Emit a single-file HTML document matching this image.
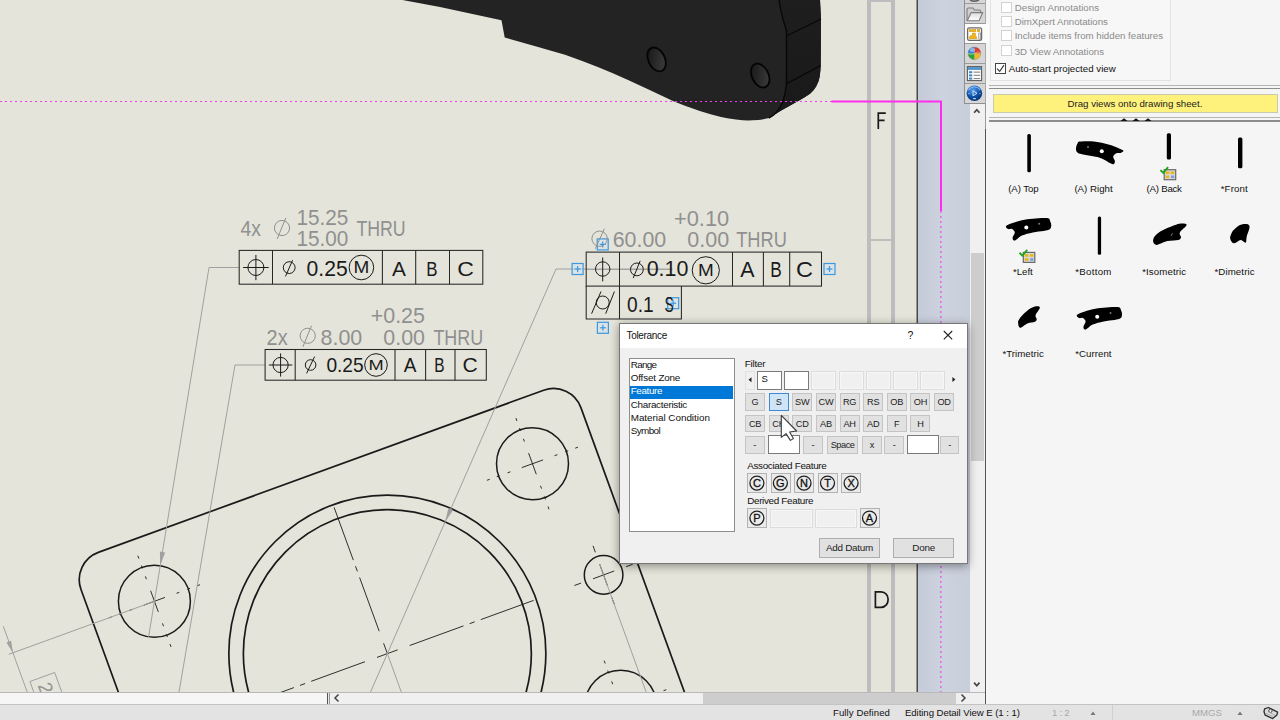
<!DOCTYPE html>
<html><head><meta charset="utf-8">
<style>
*{margin:0;padding:0;box-sizing:border-box}
html,body{width:1280px;height:720px;overflow:hidden;background:#e4e4da;font-family:"Liberation Sans",sans-serif;}
#root{position:absolute;left:0;top:0;width:1280px;height:720px;overflow:hidden}
.abs{position:absolute}
svg{position:absolute;left:0;top:0;overflow:hidden}
svg text{font-family:"Liberation Sans",sans-serif}
.btn{position:absolute;background:#e1e1e1;border:1px solid #c4c4c4;font-size:9.2px;color:#222;text-align:center;line-height:15px;height:17.5px;width:20px;white-space:nowrap;letter-spacing:-0.2px}
.cb{width:20px !important;height:20px !important;background:#eaeaea !important;border-color:#b2b2b2 !important}
.box{position:absolute;background:#fff;border:1px solid #7a7a7a;height:18px}
.dbox{position:absolute;background:#f0f0f0;border:1px solid #dcdcdc;height:18px;box-shadow:inset 0 0 0 1px #f7f7f7}
.lbl{position:absolute;font-size:10px;color:#111;white-space:nowrap;line-height:12px}
.glbl{position:absolute;font-size:10px;color:#8a8a8a;white-space:nowrap;line-height:12px}
.chk{position:absolute;width:11px;height:11px;background:#fff;border:1px solid #d2d2d2}
.tl{position:absolute;font-size:10px;color:#111;white-space:nowrap;line-height:12px;transform:translateX(-50%)}
</style></head><body><div id="root">
<svg id="cv" width="985" height="692" viewBox="0 0 985 692">
<defs>
<linearGradient id="bg2" x1="0" y1="0" x2="1" y2="0"><stop offset="0" stop-color="#c6cbd9"/><stop offset="0.5" stop-color="#cdd2df"/><stop offset="1" stop-color="#c9cedb"/></linearGradient>
</defs>
<rect x="0" y="0" width="918" height="692" fill="#e4e4da"/>
<rect x="918" y="0" width="52" height="692" fill="url(#bg2)"/>
<rect x="916.5" y="0" width="1.5" height="692" fill="#484848"/>
<rect x="867" y="0" width="4" height="692" fill="#bdbdbd"/>
<rect x="891" y="0" width="4" height="692" fill="#bdbdbd"/>
<rect x="867" y="0" width="28" height="2" fill="#bdbdbd"/>
<rect x="871" y="239" width="20" height="2" fill="#bdbdbd"/>
<!-- 3D part -->
<defs><linearGradient id="hg" x1="0" y1="0" x2="1" y2="1"><stop offset="0.15" stop-color="#1a1a1a"/><stop offset="0.9" stop-color="#3d3d3d"/></linearGradient><linearGradient id="sf" x1="0" y1="0" x2="0" y2="1"><stop offset="0" stop-color="#1e1e1e"/><stop offset="1" stop-color="#191919"/></linearGradient></defs>
<path d="M402.5,0 L440,7 L501.5,20.3 L504.7,37.5 Q535,46 565,54.7 Q600,67 627.5,79.7 Q650,90 674,101.5 Q700,112 721,117 Q740,121 752.5,120.3 Q762,120.2 768.75,118.1 L781.25,110.6 L800,100 Q806,96.5 810,93.75 Q814,90.5 816.25,86.25 Q819,81.5 819.75,76.25 Q820.6,70 820.7,65 L821,19 L820,0 Z" fill="#232323"/>
<path d="M779,0 Q782,18 786.5,31 L786.5,83.75 Q785.5,94 782.5,102.5 Q780,108 776.25,112.5 Q773,116 768.75,118.1 L781.25,110.6 L800,100 Q806,96.5 810,93.75 Q814,90.5 816.25,86.25 Q819,81.5 819.75,76.25 Q820.6,70 820.7,65 L821,19 L820,0 Z" fill="url(#sf)"/>
<path d="M779,0 Q782,18 786.5,31 L786.5,83.75 Q785.5,94 782.5,102.5 Q780,108 776.25,112.5 Q773,116 768.75,118.1" fill="none" stroke="#080808" stroke-width="1.4"/>
<line x1="786.5" y1="36" x2="821" y2="19" stroke="#080808" stroke-width="1.3"/>
<line x1="786.5" y1="83.75" x2="820.5" y2="65.6" stroke="#080808" stroke-width="1.3"/>
<ellipse cx="656.6" cy="59.4" rx="8.3" ry="12.6" transform="rotate(-26 656.6 59.4)" fill="url(#hg)" stroke="#040404" stroke-width="1.8"/>
<ellipse cx="760.2" cy="75.6" rx="8.3" ry="12.6" transform="rotate(-26 760.2 75.6)" fill="url(#hg)" stroke="#040404" stroke-width="1.8"/>
<!-- magenta lines -->
<line x1="0" y1="101.5" x2="832" y2="101.5" stroke="#f23cf0" stroke-width="1.1" stroke-dasharray="2,3"/>
<path d="M831.5,101.5 L941,101.5 L941,211" fill="none" stroke="#ff2eee" stroke-width="2"/>
<line x1="940.9" y1="211" x2="940.9" y2="692" stroke="#f23cf0" stroke-width="1.1" stroke-dasharray="2,3"/>
<!-- zone letters -->
<path d="M878.3,129 L878.3,113.1 L885.8,113.1 M878.3,120.3 L884.6,120.3" fill="none" stroke="#1a1a1a" stroke-width="1.7"/>
<path d="M875.4,591.9 L881,591.9 C890.5,591.9 890.5,607.3 881,607.3 L875.4,607.3 Z" fill="none" stroke="#1a1a1a" stroke-width="1.7"/>
<path d="M240.0,1026.5 L81.0,589.5 A29,29 0 0 1 98.3,552.4 L543.7,390.2 A29,29 0 0 1 580.9,407.6 L739.9,844.5" fill="none" stroke="#1a1a1a" stroke-width="1.7"/>
<circle cx="387.35" cy="653.6" r="158.5" fill="none" stroke="#1a1a1a" stroke-width="1.7"/>
<circle cx="387.35" cy="653.6" r="144" fill="none" stroke="#1a1a1a" stroke-width="1.7"/>
<circle cx="154.4" cy="601.3" r="36" fill="none" stroke="#1a1a1a" stroke-width="1.5"/>
<line x1="143.8" y1="605.2" x2="165.0" y2="597.4" stroke="#1a1a1a" stroke-width="0.9"/>
<line x1="132.3" y1="609.4" x2="129.5" y2="610.4" stroke="#1a1a1a" stroke-width="0.9"/>
<line x1="121.5" y1="613.3" x2="118.7" y2="614.3" stroke="#1a1a1a" stroke-width="0.9"/>
<line x1="111.7" y1="616.9" x2="108.8" y2="617.9" stroke="#1a1a1a" stroke-width="0.9"/>
<line x1="176.5" y1="593.3" x2="179.3" y2="592.3" stroke="#1a1a1a" stroke-width="0.9"/>
<line x1="187.3" y1="589.3" x2="190.1" y2="588.3" stroke="#1a1a1a" stroke-width="0.9"/>
<line x1="197.2" y1="585.8" x2="200.0" y2="584.7" stroke="#1a1a1a" stroke-width="0.9"/>
<line x1="150.6" y1="590.7" x2="158.3" y2="611.9" stroke="#1a1a1a" stroke-width="0.9"/>
<line x1="146.4" y1="579.2" x2="145.4" y2="576.4" stroke="#1a1a1a" stroke-width="0.9"/>
<line x1="142.4" y1="568.4" x2="141.4" y2="565.6" stroke="#1a1a1a" stroke-width="0.9"/>
<line x1="138.9" y1="558.6" x2="137.8" y2="555.7" stroke="#1a1a1a" stroke-width="0.9"/>
<line x1="162.5" y1="623.4" x2="163.5" y2="626.2" stroke="#1a1a1a" stroke-width="0.9"/>
<line x1="166.4" y1="634.2" x2="167.4" y2="637.0" stroke="#1a1a1a" stroke-width="0.9"/>
<line x1="170.0" y1="644.1" x2="171.0" y2="646.9" stroke="#1a1a1a" stroke-width="0.9"/>
<circle cx="532.5" cy="463.7" r="36" fill="none" stroke="#1a1a1a" stroke-width="1.5"/>
<line x1="521.8" y1="467.6" x2="543.1" y2="459.9" stroke="#1a1a1a" stroke-width="0.9"/>
<line x1="510.4" y1="471.8" x2="507.6" y2="472.8" stroke="#1a1a1a" stroke-width="0.9"/>
<line x1="499.6" y1="475.7" x2="496.7" y2="476.7" stroke="#1a1a1a" stroke-width="0.9"/>
<line x1="489.7" y1="479.3" x2="486.9" y2="480.3" stroke="#1a1a1a" stroke-width="0.9"/>
<line x1="554.5" y1="455.7" x2="557.4" y2="454.7" stroke="#1a1a1a" stroke-width="0.9"/>
<line x1="565.3" y1="451.7" x2="568.2" y2="450.7" stroke="#1a1a1a" stroke-width="0.9"/>
<line x1="575.2" y1="448.2" x2="578.0" y2="447.1" stroke="#1a1a1a" stroke-width="0.9"/>
<line x1="528.6" y1="453.1" x2="536.3" y2="474.3" stroke="#1a1a1a" stroke-width="0.9"/>
<line x1="524.4" y1="441.6" x2="523.4" y2="438.8" stroke="#1a1a1a" stroke-width="0.9"/>
<line x1="520.5" y1="430.8" x2="519.5" y2="428.0" stroke="#1a1a1a" stroke-width="0.9"/>
<line x1="516.9" y1="421.0" x2="515.9" y2="418.1" stroke="#1a1a1a" stroke-width="0.9"/>
<line x1="540.5" y1="485.8" x2="541.5" y2="488.6" stroke="#1a1a1a" stroke-width="0.9"/>
<line x1="544.4" y1="496.6" x2="545.5" y2="499.4" stroke="#1a1a1a" stroke-width="0.9"/>
<line x1="548.0" y1="506.5" x2="549.0" y2="509.3" stroke="#1a1a1a" stroke-width="0.9"/>
<circle cx="620.7" cy="706.3" r="36" fill="none" stroke="#1a1a1a" stroke-width="1.5"/>
<line x1="610.1" y1="710.1" x2="631.4" y2="702.4" stroke="#1a1a1a" stroke-width="0.9"/>
<line x1="598.7" y1="714.3" x2="595.8" y2="715.3" stroke="#1a1a1a" stroke-width="0.9"/>
<line x1="587.8" y1="718.2" x2="585.0" y2="719.3" stroke="#1a1a1a" stroke-width="0.9"/>
<line x1="578.0" y1="721.8" x2="575.2" y2="722.8" stroke="#1a1a1a" stroke-width="0.9"/>
<line x1="642.8" y1="698.2" x2="645.6" y2="697.2" stroke="#1a1a1a" stroke-width="0.9"/>
<line x1="653.6" y1="694.3" x2="656.4" y2="693.3" stroke="#1a1a1a" stroke-width="0.9"/>
<line x1="663.5" y1="690.7" x2="666.3" y2="689.7" stroke="#1a1a1a" stroke-width="0.9"/>
<line x1="616.9" y1="695.6" x2="624.6" y2="716.9" stroke="#1a1a1a" stroke-width="0.9"/>
<line x1="612.7" y1="684.2" x2="611.7" y2="681.4" stroke="#1a1a1a" stroke-width="0.9"/>
<line x1="608.8" y1="673.4" x2="607.7" y2="670.5" stroke="#1a1a1a" stroke-width="0.9"/>
<line x1="605.2" y1="663.5" x2="604.1" y2="660.7" stroke="#1a1a1a" stroke-width="0.9"/>
<line x1="628.8" y1="728.3" x2="629.8" y2="731.2" stroke="#1a1a1a" stroke-width="0.9"/>
<line x1="632.7" y1="739.1" x2="633.7" y2="742.0" stroke="#1a1a1a" stroke-width="0.9"/>
<line x1="636.3" y1="749.0" x2="637.3" y2="751.8" stroke="#1a1a1a" stroke-width="0.9"/>
<circle cx="603.6" cy="574.9" r="19.3" fill="none" stroke="#1a1a1a" stroke-width="1.5"/>
<line x1="593.0" y1="578.8" x2="614.2" y2="571.0" stroke="#1a1a1a" stroke-width="0.9"/>
<line x1="581.0" y1="583.1" x2="574.4" y2="585.5" stroke="#1a1a1a" stroke-width="0.9"/>
<line x1="626.1" y1="566.7" x2="632.7" y2="564.3" stroke="#1a1a1a" stroke-width="0.9"/>
<line x1="599.7" y1="564.3" x2="607.4" y2="585.5" stroke="#1a1a1a" stroke-width="0.9"/>
<line x1="595.4" y1="552.3" x2="593.0" y2="545.8" stroke="#1a1a1a" stroke-width="0.9"/>
<line x1="611.8" y1="597.5" x2="614.2" y2="604.0" stroke="#1a1a1a" stroke-width="0.9"/>
<circle cx="242.6" cy="843.6" r="36" fill="none" stroke="#1a1a1a" stroke-width="1.5"/>
<line x1="232.0" y1="847.4" x2="253.2" y2="839.7" stroke="#1a1a1a" stroke-width="0.9"/>
<line x1="220.5" y1="851.6" x2="217.7" y2="852.6" stroke="#1a1a1a" stroke-width="0.9"/>
<line x1="209.7" y1="855.5" x2="206.9" y2="856.6" stroke="#1a1a1a" stroke-width="0.9"/>
<line x1="199.8" y1="859.1" x2="197.0" y2="860.2" stroke="#1a1a1a" stroke-width="0.9"/>
<line x1="264.7" y1="835.5" x2="267.5" y2="834.5" stroke="#1a1a1a" stroke-width="0.9"/>
<line x1="275.5" y1="831.6" x2="278.3" y2="830.6" stroke="#1a1a1a" stroke-width="0.9"/>
<line x1="285.3" y1="828.0" x2="288.2" y2="827.0" stroke="#1a1a1a" stroke-width="0.9"/>
<line x1="238.7" y1="832.9" x2="246.5" y2="854.2" stroke="#1a1a1a" stroke-width="0.9"/>
<line x1="234.6" y1="821.5" x2="233.5" y2="818.7" stroke="#1a1a1a" stroke-width="0.9"/>
<line x1="230.6" y1="810.7" x2="229.6" y2="807.9" stroke="#1a1a1a" stroke-width="0.9"/>
<line x1="227.0" y1="800.8" x2="226.0" y2="798.0" stroke="#1a1a1a" stroke-width="0.9"/>
<line x1="250.6" y1="865.6" x2="251.7" y2="868.5" stroke="#1a1a1a" stroke-width="0.9"/>
<line x1="254.6" y1="876.5" x2="255.6" y2="879.3" stroke="#1a1a1a" stroke-width="0.9"/>
<line x1="258.2" y1="886.3" x2="259.2" y2="889.1" stroke="#1a1a1a" stroke-width="0.9"/>
<line x1="387.4" y1="653.6" x2="397.7" y2="649.8" stroke="#1a1a1a" stroke-width="0.9"/>
<line x1="409.7" y1="645.5" x2="463.5" y2="625.9" stroke="#1a1a1a" stroke-width="0.9"/>
<line x1="469.6" y1="623.7" x2="474.7" y2="621.8" stroke="#1a1a1a" stroke-width="0.9"/>
<line x1="480.8" y1="619.6" x2="533.6" y2="600.4" stroke="#1a1a1a" stroke-width="0.9"/>
<line x1="387.4" y1="653.6" x2="377.0" y2="657.4" stroke="#1a1a1a" stroke-width="0.9"/>
<line x1="365.0" y1="661.7" x2="311.2" y2="681.3" stroke="#1a1a1a" stroke-width="0.9"/>
<line x1="305.1" y1="683.5" x2="300.0" y2="685.4" stroke="#1a1a1a" stroke-width="0.9"/>
<line x1="293.9" y1="687.6" x2="11.5" y2="790.4" stroke="#1a1a1a" stroke-width="0.9"/>
<line x1="387.4" y1="653.6" x2="383.6" y2="643.3" stroke="#1a1a1a" stroke-width="0.9"/>
<line x1="379.2" y1="631.2" x2="359.6" y2="577.5" stroke="#1a1a1a" stroke-width="0.9"/>
<line x1="357.4" y1="571.4" x2="355.5" y2="566.2" stroke="#1a1a1a" stroke-width="0.9"/>
<line x1="353.3" y1="560.1" x2="334.1" y2="507.4" stroke="#1a1a1a" stroke-width="0.9"/>
<line x1="239.0" y1="267.5" x2="209.0" y2="267.5" stroke="#a0a0a0" stroke-width="1"/>
<line x1="209.0" y1="267.5" x2="148.6" y2="636.8" stroke="#a0a0a0" stroke-width="1"/>
<path d="M160.2,565.8 L159.9,551.5 L165.1,552.4 Z" fill="#a0a0a0"/>
<line x1="265.0" y1="365.0" x2="235.0" y2="365.0" stroke="#a0a0a0" stroke-width="1"/>
<line x1="235.0" y1="365.0" x2="179.0" y2="692.0" stroke="#a0a0a0" stroke-width="1"/>
<line x1="586.0" y1="269.0" x2="556.0" y2="269.0" stroke="#a0a0a0" stroke-width="1"/>
<line x1="586" y1="269.2" x2="672.5" y2="269.2" stroke="#7c7c7c" stroke-width="0.9"/>
<line x1="556.0" y1="269.0" x2="369.3" y2="694.8" stroke="#a0a0a0" stroke-width="1"/>
<path d="M445.2,521.7 L448.4,507.9 L453.2,509.9 Z" fill="#a0a0a0"/>
<line x1="387.4" y1="653.6" x2="402.7" y2="695.9" stroke="#a0a0a0" stroke-width="1"/>
<line x1="154.4" y1="601.3" x2="8.8" y2="654.3" stroke="#a0a0a0" stroke-width="1"/>
<line x1="3.3" y1="626.3" x2="43.3" y2="736.3" stroke="#a0a0a0" stroke-width="1"/>
<path d="M12.9,652.8 L6.5,642.4 L11.1,640.7 Z" fill="#a0a0a0"/>
<line x1="599.6" y1="564.1" x2="648.0" y2="697.1" stroke="#a0a0a0" stroke-width="1"/>
<g transform="translate(387.35,653.6) rotate(-20)"><rect x="-345.4" y="-96" width="26.3" height="60" fill="none" stroke="#a0a0a0" stroke-width="0.9"/><text transform="translate(-339.6,-90) rotate(90)" font-size="19.5" fill="#959595">2</text></g>
<rect x="597.2" y="238.9" width="11" height="11" fill="#cfe3f5" fill-opacity="0.55" stroke="#3f97dc" stroke-width="1.2"/>
<line x1="599.7" y1="244.4" x2="605.7" y2="244.4" stroke="#3f97dc" stroke-width="1.2"/>
<line x1="602.7" y1="241.4" x2="602.7" y2="247.4" stroke="#3f97dc" stroke-width="1.2"/>
<rect x="572.1" y="263.5" width="11" height="11" fill="#cfe3f5" fill-opacity="0.55" stroke="#3f97dc" stroke-width="1.2"/>
<line x1="574.6" y1="269.0" x2="580.6" y2="269.0" stroke="#3f97dc" stroke-width="1.2"/>
<line x1="577.6" y1="266.0" x2="577.6" y2="272.0" stroke="#3f97dc" stroke-width="1.2"/>
<rect x="824.0" y="263.5" width="11" height="11" fill="#cfe3f5" fill-opacity="0.55" stroke="#3f97dc" stroke-width="1.2"/>
<line x1="826.5" y1="269.0" x2="832.5" y2="269.0" stroke="#3f97dc" stroke-width="1.2"/>
<line x1="829.5" y1="266.0" x2="829.5" y2="272.0" stroke="#3f97dc" stroke-width="1.2"/>
<rect x="667.7" y="297.7" width="11" height="11" fill="#cfe3f5" fill-opacity="0.55" stroke="#3f97dc" stroke-width="1.2"/>
<line x1="670.2" y1="303.2" x2="676.2" y2="303.2" stroke="#3f97dc" stroke-width="1.2"/>
<line x1="673.2" y1="300.2" x2="673.2" y2="306.2" stroke="#3f97dc" stroke-width="1.2"/>
<rect x="597.4" y="322.3" width="11" height="11" fill="#cfe3f5" fill-opacity="0.55" stroke="#3f97dc" stroke-width="1.2"/>
<line x1="599.9" y1="327.8" x2="605.9" y2="327.8" stroke="#3f97dc" stroke-width="1.2"/>
<line x1="602.9" y1="324.8" x2="602.9" y2="330.8" stroke="#3f97dc" stroke-width="1.2"/>
<rect x="239.2" y="250.4" width="243.6" height="33.8" fill="none" stroke="#262626" stroke-width="1.05"/>
<line x1="272.5" y1="250.4" x2="272.5" y2="284.2" stroke="#262626" stroke-width="1.05"/>
<line x1="382.4" y1="250.4" x2="382.4" y2="284.2" stroke="#262626" stroke-width="1.05"/>
<line x1="415.7" y1="250.4" x2="415.7" y2="284.2" stroke="#262626" stroke-width="1.05"/>
<line x1="449.5" y1="250.4" x2="449.5" y2="284.2" stroke="#262626" stroke-width="1.05"/>
<circle cx="255.9" cy="267.5" r="8" fill="none" stroke="#1a1a1a" stroke-width="1"/>
<line x1="243.1" y1="267.5" x2="268.7" y2="267.5" stroke="#1a1a1a" stroke-width="1"/>
<line x1="255.9" y1="254.9" x2="255.9" y2="280.2" stroke="#1a1a1a" stroke-width="1"/>
<circle cx="289.2" cy="267.6" r="5.9" fill="none" stroke="#1a1a1a" stroke-width="1"/>
<line x1="285.5" y1="276.4" x2="292.6" y2="260.2" stroke="#1a1a1a" stroke-width="1"/>
<text x="306.6" y="276.2" font-size="22.3" fill="#1a1a1a" text-anchor="start" textLength="41.1" lengthAdjust="spacingAndGlyphs">0.25</text>
<circle cx="361.4" cy="267.5" r="12.3" fill="none" stroke="#1a1a1a" stroke-width="1"/>
<text x="353.5" y="273.2" font-size="15.9" fill="#1a1a1a" text-anchor="start" textLength="15.8" lengthAdjust="spacingAndGlyphs">M</text>
<text x="399.0" y="275.9" font-size="21.1" fill="#1a1a1a" text-anchor="middle" textLength="13.9" lengthAdjust="spacingAndGlyphs">A</text>
<text x="432.0" y="275.9" font-size="21.1" fill="#1a1a1a" text-anchor="middle" textLength="11.3" lengthAdjust="spacingAndGlyphs">B</text>
<text x="465.5" y="275.9" font-size="21.1" fill="#1a1a1a" text-anchor="middle" textLength="16.6" lengthAdjust="spacingAndGlyphs">C</text>
<text x="240.4" y="236.2" font-size="21.4" fill="#909090" text-anchor="start" textLength="20.4" lengthAdjust="spacingAndGlyphs">4x</text>
<circle cx="282.0" cy="228.0" r="7.6" fill="none" stroke="#909090" stroke-width="1"/>
<line x1="277.2" y1="239.0" x2="285.8" y2="217.9" stroke="#909090" stroke-width="1"/>
<text x="296.4" y="224.6" font-size="21.8" fill="#909090" text-anchor="start" textLength="51.9" lengthAdjust="spacingAndGlyphs">15.25</text>
<text x="296.4" y="246.3" font-size="21.8" fill="#909090" text-anchor="start" textLength="51.9" lengthAdjust="spacingAndGlyphs">15.00</text>
<text x="356.4" y="236.4" font-size="21.8" fill="#909090" text-anchor="start" textLength="49.3" lengthAdjust="spacingAndGlyphs">THRU</text>
<rect x="265.1" y="349.5" width="221.2" height="30.7" fill="none" stroke="#262626" stroke-width="1.05"/>
<line x1="295.2" y1="349.5" x2="295.2" y2="380.2" stroke="#262626" stroke-width="1.05"/>
<line x1="395.0" y1="349.5" x2="395.0" y2="380.2" stroke="#262626" stroke-width="1.05"/>
<line x1="425.6" y1="349.5" x2="425.6" y2="380.2" stroke="#262626" stroke-width="1.05"/>
<line x1="455.0" y1="349.5" x2="455.0" y2="380.2" stroke="#262626" stroke-width="1.05"/>
<circle cx="280.6" cy="365.0" r="7.6" fill="none" stroke="#1a1a1a" stroke-width="1"/>
<line x1="268.9" y1="365.0" x2="292.3" y2="365.0" stroke="#1a1a1a" stroke-width="1"/>
<line x1="280.6" y1="353.4" x2="280.6" y2="376.6" stroke="#1a1a1a" stroke-width="1"/>
<circle cx="310.6" cy="365.0" r="5.3" fill="none" stroke="#1a1a1a" stroke-width="1"/>
<line x1="306.6" y1="373.4" x2="314.6" y2="356.6" stroke="#1a1a1a" stroke-width="1"/>
<text x="326.4" y="372.2" font-size="20.2" fill="#1a1a1a" text-anchor="start" textLength="37.3" lengthAdjust="spacingAndGlyphs">0.25</text>
<circle cx="376.0" cy="365.0" r="11.3" fill="none" stroke="#1a1a1a" stroke-width="1"/>
<text x="368.4" y="370.2" font-size="14.6" fill="#1a1a1a" text-anchor="start" textLength="15.2" lengthAdjust="spacingAndGlyphs">M</text>
<text x="410.0" y="372.0" font-size="19.3" fill="#1a1a1a" text-anchor="middle" textLength="12.7" lengthAdjust="spacingAndGlyphs">A</text>
<text x="439.5" y="372.0" font-size="19.3" fill="#1a1a1a" text-anchor="middle" textLength="10.3" lengthAdjust="spacingAndGlyphs">B</text>
<text x="470.0" y="372.0" font-size="19.3" fill="#1a1a1a" text-anchor="middle" textLength="15.2" lengthAdjust="spacingAndGlyphs">C</text>
<text x="266.6" y="344.6" font-size="21.4" fill="#909090" text-anchor="start" textLength="21.0" lengthAdjust="spacingAndGlyphs">2x</text>
<circle cx="307.7" cy="335.8" r="7.6" fill="none" stroke="#909090" stroke-width="1"/>
<line x1="302.9" y1="346.8" x2="311.5" y2="325.7" stroke="#909090" stroke-width="1"/>
<text x="320.6" y="344.6" font-size="21.8" fill="#909090" text-anchor="start" textLength="41.7" lengthAdjust="spacingAndGlyphs">8.00</text>
<text x="370.7" y="323.1" font-size="21.8" fill="#909090" text-anchor="start" textLength="54.3" lengthAdjust="spacingAndGlyphs">+0.25</text>
<text x="383.3" y="344.6" font-size="21.8" fill="#909090" text-anchor="start" textLength="41.7" lengthAdjust="spacingAndGlyphs">0.00</text>
<text x="433.4" y="344.6" font-size="21.8" fill="#909090" text-anchor="start" textLength="49.9" lengthAdjust="spacingAndGlyphs">THRU</text>
<rect x="586.2" y="252.1" width="235.3" height="34.0" fill="none" stroke="#262626" stroke-width="1.05"/>
<line x1="619.5" y1="252.1" x2="619.5" y2="286.1" stroke="#262626" stroke-width="1.05"/>
<line x1="732.5" y1="252.1" x2="732.5" y2="286.1" stroke="#262626" stroke-width="1.05"/>
<line x1="763.4" y1="252.1" x2="763.4" y2="286.1" stroke="#262626" stroke-width="1.05"/>
<line x1="789.7" y1="252.1" x2="789.7" y2="286.1" stroke="#262626" stroke-width="1.05"/>
<path d="M586.2,286.1 L586.2,318.9 L681.4,318.9 L681.4,286.1 M619.5,286.1 L619.5,318.9" fill="none" stroke="#262626" stroke-width="1.05"/>
<circle cx="602.7" cy="269.0" r="7.2" fill="none" stroke="#1a1a1a" stroke-width="1"/>
<line x1="602.7" y1="257.5" x2="602.7" y2="281.4" stroke="#1a1a1a" stroke-width="1"/>
<circle cx="636.9" cy="269.4" r="6.4" fill="none" stroke="#1a1a1a" stroke-width="1"/>
<line x1="633.2" y1="278.1" x2="640.2" y2="260.9" stroke="#1a1a1a" stroke-width="1"/>
<text x="646.7" y="276.4" font-size="22.5" fill="#1a1a1a" text-anchor="start" textLength="41.7" lengthAdjust="spacingAndGlyphs">0.10</text>
<circle cx="705.8" cy="270.3" r="13.6" fill="none" stroke="#1a1a1a" stroke-width="1"/>
<text x="697.9" y="276.0" font-size="15.8" fill="#1a1a1a" text-anchor="start" textLength="15.8" lengthAdjust="spacingAndGlyphs">M</text>
<text x="747.5" y="277.4" font-size="21.6" fill="#1a1a1a" text-anchor="middle" textLength="14.3" lengthAdjust="spacingAndGlyphs">A</text>
<text x="776.0" y="277.4" font-size="21.6" fill="#1a1a1a" text-anchor="middle" textLength="11.5" lengthAdjust="spacingAndGlyphs">B</text>
<text x="804.4" y="277.4" font-size="21.6" fill="#1a1a1a" text-anchor="middle" textLength="17.0" lengthAdjust="spacingAndGlyphs">C</text>
<circle cx="602.7" cy="302.5" r="6.5" fill="none" stroke="#1a1a1a" stroke-width="1"/>
<line x1="591.6" y1="313.7" x2="601.0" y2="291.5" stroke="#1a1a1a" stroke-width="1"/>
<line x1="605.7" y1="313.7" x2="614.4" y2="291.5" stroke="#1a1a1a" stroke-width="1"/>
<text x="627.0" y="311.8" font-size="22.3" fill="#1a1a1a" text-anchor="start" textLength="26.6" lengthAdjust="spacingAndGlyphs">0.1</text>
<text x="664.6" y="311.8" font-size="22.3" fill="#1a1a1a" text-anchor="start" textLength="9.2" lengthAdjust="spacingAndGlyphs">S</text>
<circle cx="599.6" cy="238.7" r="7.7" fill="none" stroke="#909090" stroke-width="1"/>
<line x1="595.4" y1="248.6" x2="604.4" y2="228.7" stroke="#909090" stroke-width="1"/>
<text x="612.7" y="247.3" font-size="22.4" fill="#909090" text-anchor="start" textLength="53.5" lengthAdjust="spacingAndGlyphs">60.00</text>
<text x="674.0" y="226.1" font-size="22.4" fill="#909090" text-anchor="start" textLength="55.2" lengthAdjust="spacingAndGlyphs">+0.10</text>
<text x="687.3" y="247.3" font-size="22.4" fill="#909090" text-anchor="start" textLength="41.9" lengthAdjust="spacingAndGlyphs">0.00</text>
<text x="736.2" y="247.3" font-size="22.4" fill="#909090" text-anchor="start" textLength="50.7" lengthAdjust="spacingAndGlyphs">THRU</text>
</svg>
<!-- vertical scrollbar of canvas -->
<div class="abs" style="left:969.5px;top:103px;width:15.5px;height:589px;background:#f0f0f0"></div>
<div class="abs" style="left:971px;top:253px;width:13px;height:208px;background:#cdcdcd"></div>
<svg width="1280" height="720" style="pointer-events:none">
<path d="M974.1,112.8 L976.8,109.7 L979.5,112.8" fill="none" stroke="#444" stroke-width="1.7"/>
<path d="M974.1,682.6 L976.8,685.7 L979.5,682.6" fill="none" stroke="#444" stroke-width="1.7"/>
</svg>
<!-- panel -->
<div class="abs" style="left:985px;top:0;width:295px;height:704px;background:#f5f5f5;"></div>
<div class="abs" style="left:984.6px;top:103px;width:1.4px;height:26px;background:#9a9a9a"></div><div class="abs" style="left:984.6px;top:128.5px;width:1.4px;height:576px;background:#555"></div>
<!-- icon column -->
<div class="abs" style="left:964px;top:0;width:22px;height:103.5px;background:#d6d6d6;border-left:1px solid #8f8f8f;border-right:1px solid #a8a8a8;border-bottom:1px solid #8f8f8f"></div>
<div class="abs" style="left:965px;top:24px;width:24px;height:19px;background:#fcfcfc"></div>
<div class="abs" style="left:965px;top:3px;width:20px;height:1px;background:#9a9a9a"></div>
<div class="abs" style="left:965px;top:23.3px;width:20px;height:1px;background:#9a9a9a"></div>
<div class="abs" style="left:965px;top:43px;width:20px;height:1px;background:#9a9a9a"></div>
<div class="abs" style="left:965px;top:63.2px;width:20px;height:1px;background:#9a9a9a"></div>
<div class="abs" style="left:965px;top:83.2px;width:20px;height:1px;background:#9a9a9a"></div>
<svg width="1280" height="720" style="pointer-events:none">
<defs>
<radialGradient id="gb" cx="0.4" cy="0.3" r="0.8"><stop offset="0" stop-color="#5aa0ee"/><stop offset="0.55" stop-color="#0f4fa3"/><stop offset="1" stop-color="#062a66"/></radialGradient>
<linearGradient id="fg" x1="0" y1="0" x2="0" y2="1"><stop offset="0" stop-color="#dcdcdc"/><stop offset="1" stop-color="#ffffff"/></linearGradient>
<clipPath id="gc"><circle cx="974.4" cy="53.3" r="6.4"/></clipPath>
</defs>
<!-- tab 1 partial icon -->
<path d="M970,0 Q974,2.2 979,0" fill="none" stroke="#666" stroke-width="1.6"/>
<!-- folder -->
<path d="M967,20.6 L967,9.2 Q967,8 968.2,8 L972.8,8 L974.6,10 L979.6,10 Q980.6,10 980.6,11.2 L980.6,12.6" fill="#cfcfcf" stroke="#7c7c7c" stroke-width="1.1"/>
<path d="M967.2,20.8 L971.2,12.6 L982.8,12.6 L979,20.8 Z" fill="url(#fg)" stroke="#7c7c7c" stroke-width="1.1" stroke-linejoin="round"/>
<!-- config icon (active) -->
<rect x="967.6" y="27.8" width="14" height="12.6" rx="1.6" fill="#fdfdfd" stroke="#6a6a6a" stroke-width="1.3"/>
<rect x="969.2" y="29.5" width="6.6" height="2.2" fill="#f2b51a" stroke="#c98c0a" stroke-width="0.5"/>
<rect x="977.2" y="29.5" width="2.6" height="2.2" fill="#f2b51a" stroke="#c98c0a" stroke-width="0.5"/>
<path d="M972.5,33 L975.4,33 L975.4,35.6 Q975.6,36.6 976.7,37 L976.7,38.7 L969.2,38.7 L969.2,37 Q970.3,36.6 970.5,35.6 L972.5,35.6 Z" fill="#f2b51a" stroke="#c98c0a" stroke-width="0.5"/>
<rect x="978.8" y="33" width="1.9" height="6.2" fill="#efefef" stroke="#777" stroke-width="0.6"/>
<!-- globe -->
<g clip-path="url(#gc)">
<rect x="968" y="46.9" width="6.6" height="6.6" fill="#2f7fe0"/>
<rect x="974.6" y="46.9" width="6.4" height="6.6" fill="#e03a28"/>
<rect x="968" y="53.5" width="6.6" height="6.4" fill="#2da336"/>
<rect x="974.6" y="53.5" width="6.4" height="6.4" fill="#f0b823"/>
<path d="M968,53.5 Q972,55.5 974.6,53.3 Q977,51 981,52.5" fill="none" stroke="#e9e9e9" stroke-width="0.7" opacity="0.7"/>
<ellipse cx="972.4" cy="50" rx="2.6" ry="2" fill="#fff" opacity="0.45"/>
</g>
<circle cx="974.4" cy="53.3" r="6.4" fill="none" stroke="#777" stroke-width="0.5" opacity="0.6"/>
<!-- list icon -->
<rect x="967.4" y="66.6" width="14.2" height="14" fill="#fbfbfb" stroke="#5d5d5d" stroke-width="1.1"/>
<rect x="967.9" y="67.1" width="13.2" height="2.8" fill="#4f93c9"/>
<rect x="969" y="71.2" width="3.2" height="2" fill="#3f86c2"/><rect x="973.6" y="71.6" width="6.6" height="1.1" fill="#8a8a8a"/>
<rect x="969" y="74.4" width="3.2" height="2" fill="#3f86c2"/><rect x="973.6" y="74.8" width="6.6" height="1.1" fill="#8a8a8a"/>
<rect x="969" y="77.6" width="3.2" height="2" fill="#3f86c2"/><rect x="973.6" y="78" width="6.6" height="1.1" fill="#8a8a8a"/>
<!-- blue sphere -->
<circle cx="974.4" cy="93.3" r="7.8" fill="url(#gb)"/>
<path d="M968.6,90.4 A6.6,6.6 0 0 1 980.2,90.4" fill="none" stroke="#8cc4ff" stroke-width="1.2" opacity="0.8"/>
<path d="M973,90.8 L977,93.3 L973,95.8 Z" fill="none" stroke="#cfe6ff" stroke-width="0.9"/>
<rect x="973" y="98" width="3" height="1.2" fill="#cfe6ff" opacity="0.8"/>
<circle cx="969" cy="93.6" r="0.7" fill="#cfe6ff"/><circle cx="980" cy="93.6" r="0.7" fill="#9cc"/>
</svg>

<div class="abs" style="left:990px;top:-5px;width:181px;height:86px;border:1px solid #e3e3e3;background:#f7f7f7"></div>
<div class="chk" style="left:1001px;top:2px"></div><div class="glbl" style="left:1014.7px;top:1.5px;font-size:9.7px;letter-spacing:0.054px">Design Annotations</div>
<div class="chk" style="left:1001px;top:16px"></div><div class="glbl" style="left:1014.7px;top:15.5px;font-size:9.7px;letter-spacing:-0.027px">DimXpert Annotations</div>
<div class="chk" style="left:1001px;top:30px"></div><div class="glbl" style="left:1014.7px;top:29.7px;font-size:9.7px;letter-spacing:-0.009px">Include items from hidden features</div>
<div class="chk" style="left:1001px;top:45px"></div><div class="glbl" style="left:1014.7px;top:45.7px;font-size:9.7px;letter-spacing:0.009px">3D View Annotations</div>
<div class="chk" style="left:995px;top:63px;border-color:#444"></div><div class="lbl" style="left:1008.7px;top:62.8px;font-size:9.7px;letter-spacing:0.019px">Auto-start projected view</div>
<svg width="1280" height="720" style="pointer-events:none"><path d="M997,68.6 L999.7,71.4 L1004,65.2" fill="none" stroke="#3a3a3a" stroke-width="1.15"/></svg>
<div class="abs" style="left:989px;top:84.9px;width:291px;height:1.3px;background:#b4b4b4"></div>
<div class="abs" style="left:989px;top:87.8px;width:291px;height:1.7px;background:#8c8c8c"></div>
<div class="abs" style="left:993px;top:94px;width:285px;height:18.6px;background:#fff27c;border:1px solid #c9c9b0"></div>
<div class="lbl" style="left:1067.5px;top:97.6px;color:#222;font-size:9.7px;letter-spacing:-0.011px">Drag views onto drawing sheet.</div>
<div class="abs" style="left:989px;top:117.1px;width:291px;height:1.3px;background:#b4b4b4"></div>
<div class="abs" style="left:989px;top:120px;width:291px;height:1.7px;background:#8c8c8c"></div>
<svg width="1280" height="720" style="pointer-events:none">
<path d="M1120.5,121 L1124,118.3 L1127.5,121 Z M1132.5,121 L1136,118.3 L1139.5,121 Z M1144.5,121 L1148,118.3 L1151.5,121 Z" fill="#111"/>
<rect x="1027.3" y="134.0" width="3.6" height="38.3" rx="1.5" fill="#000"/>
<path d="M1076.0,148.5 C1076.1,146.9 1076.7,144.7 1077.5,143.5 C1078.3,142.3 1077.4,141.9 1080.4,141.6 C1083.4,141.3 1088.8,141.0 1094.0,141.6 C1099.2,142.2 1104.3,143.2 1109.4,144.7 C1114.5,146.2 1120.2,148.7 1122.5,150.0 C1124.8,151.3 1122.7,151.5 1122.3,152.0 C1121.9,152.5 1121.5,152.6 1120.4,152.9 C1119.3,153.2 1117.3,152.7 1116.0,153.4 C1114.7,154.1 1113.4,155.3 1113.2,156.7 C1113.0,158.1 1114.8,159.8 1114.9,161.1 C1115.0,162.4 1114.4,163.8 1113.6,164.2 C1112.8,164.6 1112.6,164.3 1110.5,163.3 C1108.4,162.3 1105.0,159.7 1101.8,158.4 C1098.6,157.1 1096.6,156.9 1093.0,156.2 C1089.4,155.5 1084.8,155.0 1082.0,154.3 C1079.2,153.6 1078.3,153.2 1077.2,152.2 C1076.1,151.2 1075.9,150.1 1076.0,148.5Z" fill="#000"/>
<circle cx="1101.8" cy="151.3" r="2" fill="#fff"/>
<circle cx="1088.0" cy="146.9" r="1" fill="#777"/>
<rect x="1166.8" y="133.2" width="4.2" height="26.3" rx="1.5" fill="#000"/>
<rect x="1238.0" y="137.4" width="4.4" height="30.8" rx="1.5" fill="#000"/>
<path d="M1006.0,226.3 C1005.5,227.3 1007.1,228.5 1008.2,229.0 C1009.3,229.5 1010.8,228.3 1012.0,228.9 C1013.2,229.5 1014.7,230.8 1014.8,232.4 C1014.9,234.0 1012.6,236.3 1012.6,237.8 C1012.6,239.3 1013.1,241.0 1014.8,240.6 C1016.5,240.2 1018.7,237.1 1021.9,235.6 C1025.1,234.1 1028.9,233.2 1032.8,232.4 C1036.7,231.6 1040.8,231.5 1043.8,231.0 C1046.8,230.5 1047.9,230.4 1049.2,229.6 C1050.5,228.8 1051.0,227.8 1051.2,226.3 C1051.4,224.8 1051.1,222.9 1050.3,221.4 C1049.5,219.9 1050.2,218.6 1047.0,218.1 C1043.8,217.6 1037.3,218.3 1032.8,218.7 C1028.3,219.1 1025.8,219.4 1021.9,220.3 C1018.0,221.2 1013.9,222.5 1011.0,223.6 C1008.1,224.7 1006.5,225.3 1006.0,226.3Z" fill="#000"/>
<circle cx="1026.3" cy="227.6" r="2" fill="#fff"/>
<circle cx="1039.2" cy="223.8" r="1" fill="#777"/>
<rect x="1097.8" y="216.5" width="3.3" height="38.3" rx="1.5" fill="#000"/>
<path d="M1153.1,240.6 C1153.1,242.5 1153.8,244.8 1156.4,244.9 C1159.0,245.0 1163.5,242.0 1167.4,241.1 C1171.3,240.2 1175.9,240.7 1178.3,240.0 C1180.7,239.3 1180.7,238.7 1181.0,237.3 C1181.3,235.9 1178.9,234.6 1179.9,232.4 C1180.9,230.2 1186.0,226.8 1186.5,225.2 C1187.0,223.6 1184.6,223.7 1182.7,223.6 C1180.8,223.5 1179.2,223.7 1176.1,224.7 C1172.9,225.7 1168.7,227.3 1165.2,229.1 C1161.7,230.9 1158.6,232.4 1156.4,234.5 C1154.2,236.6 1153.1,238.7 1153.1,240.6Z" fill="#000"/>
<path d="M1171,236 L1172.5,233" stroke="#888" stroke-width="0.8"/>
<path d="M1230.3,238.9 C1230.8,240.7 1232.2,243.1 1234.1,243.3 C1236.0,243.5 1238.6,240.1 1240.7,240.0 C1242.8,239.9 1244.5,243.3 1245.6,242.7 C1246.7,242.1 1246.0,239.7 1246.7,236.7 C1247.4,233.7 1250.3,228.0 1249.4,225.8 C1248.5,223.6 1244.4,224.0 1241.8,224.5 C1239.2,225.0 1237.1,226.9 1235.2,228.5 C1233.3,230.1 1232.3,231.5 1231.4,233.4 C1230.5,235.3 1229.8,237.1 1230.3,238.9Z" fill="#000"/>
<path d="M1018.1,322.8 C1018.3,324.3 1018.5,327.6 1020.2,327.7 C1021.9,327.8 1024.7,324.5 1027.4,323.4 C1030.1,322.3 1033.3,322.5 1035.0,321.7 C1036.7,320.9 1036.6,320.2 1036.7,319.0 C1036.8,317.8 1035.0,317.3 1035.6,315.2 C1036.2,313.1 1040.0,309.1 1039.9,307.5 C1039.8,305.9 1037.1,306.0 1035.0,306.4 C1032.9,306.8 1030.8,308.0 1028.4,309.7 C1026.0,311.4 1023.6,313.9 1021.9,315.7 C1020.2,317.5 1019.8,318.2 1019.1,319.5 C1018.4,320.8 1017.9,321.3 1018.1,322.8Z" fill="#000"/>
<path d="M1076.8,315.3 C1076.3,316.3 1077.9,317.5 1079.0,318.0 C1080.1,318.5 1081.6,317.3 1082.8,317.9 C1084.0,318.5 1085.5,319.8 1085.6,321.4 C1085.7,323.0 1083.4,325.3 1083.4,326.8 C1083.4,328.3 1083.9,330.0 1085.6,329.6 C1087.3,329.2 1089.5,326.1 1092.7,324.6 C1095.9,323.1 1099.7,322.2 1103.6,321.4 C1107.5,320.6 1111.6,320.5 1114.6,320.0 C1117.6,319.5 1118.7,319.4 1120.0,318.6 C1121.3,317.8 1121.8,316.8 1122.0,315.3 C1122.2,313.8 1121.9,311.9 1121.1,310.4 C1120.3,308.9 1121.0,307.6 1117.8,307.1 C1114.6,306.6 1108.1,307.3 1103.6,307.7 C1099.1,308.1 1096.6,308.4 1092.7,309.3 C1088.8,310.2 1084.7,311.5 1081.8,312.6 C1078.9,313.7 1077.3,314.3 1076.8,315.3Z" fill="#000"/>
<circle cx="1097.2" cy="316.8" r="2" fill="#fff"/>
<circle cx="1110.5" cy="313.0" r="1" fill="#777"/>
<rect x="1164.2" y="169.7" width="11.5" height="10" fill="#d8d8d8" stroke="#6a6a6a" stroke-width="1.2"/>
<rect x="1165.7" y="171.4" width="3.6" height="2.6" fill="#e8b81a"/><rect x="1170.7" y="171.4" width="3.6" height="2.6" fill="#e8b81a"/><rect x="1165.7" y="175.5" width="3.6" height="2.6" fill="#e8b81a"/><rect x="1171.0" y="175.5" width="3.2" height="2.6" fill="#7da0d8"/>
<path d="M1160.4,170.1 l2.9,2.8 l4.8,-5.8" fill="none" stroke="#1ea51e" stroke-width="1.9"/>
<rect x="1023.3" y="252.4" width="11.5" height="10" fill="#d8d8d8" stroke="#6a6a6a" stroke-width="1.2"/>
<rect x="1024.8" y="254.1" width="3.6" height="2.6" fill="#e8b81a"/><rect x="1029.8" y="254.1" width="3.6" height="2.6" fill="#e8b81a"/><rect x="1024.8" y="258.2" width="3.6" height="2.6" fill="#e8b81a"/><rect x="1030.1" y="258.2" width="3.2" height="2.6" fill="#7da0d8"/>
<path d="M1019.5,252.8 l2.9,2.8 l4.8,-5.8" fill="none" stroke="#1ea51e" stroke-width="1.9"/>

</svg>
<div class="lbl" style="left:1008.2px;top:183.0px;font-size:9.7px;letter-spacing:-0.082px">(A) Top</div>
<div class="lbl" style="left:1074.4px;top:183.0px;font-size:9.7px;letter-spacing:0.004px">(A) Right</div>
<div class="lbl" style="left:1146.6px;top:183.0px;font-size:9.7px;letter-spacing:-0.256px">(A) Back</div>
<div class="lbl" style="left:1220.7px;top:183.0px;font-size:9.7px;letter-spacing:0.137px">*Front</div>
<div class="lbl" style="left:1012.9px;top:265.8px;font-size:9.7px;letter-spacing:-0.014px">*Left</div>
<div class="lbl" style="left:1075.3px;top:265.8px;font-size:9.7px;letter-spacing:0.266px">*Bottom</div>
<div class="lbl" style="left:1142.2px;top:265.8px;font-size:9.7px;letter-spacing:0.098px">*Isometric</div>
<div class="lbl" style="left:1214.4px;top:265.8px;font-size:9.7px;letter-spacing:0.120px">*Dimetric</div>
<div class="lbl" style="left:1002.4px;top:348.2px;font-size:9.7px;letter-spacing:0.030px">*Trimetric</div>
<div class="lbl" style="left:1075.3px;top:348.2px;font-size:9.7px;letter-spacing:0.026px">*Current</div>
<div class="abs" style="left:618.8px;top:322.8px;width:349px;height:241.5px;background:#f0f0f0;border:1px solid #777;box-shadow:0 2px 9px rgba(0,0,0,0.4)"></div>
<div class="abs" style="left:619.8px;top:323.8px;width:347px;height:24.7px;background:#fff"></div>
<div class="lbl" style="left:626.5px;top:329.9px;color:#111;font-size:10px;letter-spacing:-0.320px">Tolerance</div>
<div class="lbl" style="left:907.5px;top:329px;font-size:10.5px">?</div>
<svg width="1280" height="720" style="pointer-events:none"><path d="M943.8,331 L952.2,339.4 M952.2,331 L943.8,339.4" stroke="#222" stroke-width="1.1" fill="none"/></svg>
<div class="abs" style="left:628.5px;top:357.5px;width:106px;height:174px;background:#fff;border:1px solid #8e8e8e"></div>
<div class="abs" style="left:630px;top:385.5px;width:103px;height:13.5px;background:#0078d7"></div>
<div class="lbl" style="left:630.7px;top:358.8px;color:#111;font-size:9.9px;letter-spacing:-0.693px">Range</div>
<div class="lbl" style="left:630.7px;top:372.1px;color:#111;font-size:9.9px;letter-spacing:-0.174px">Offset Zone</div>
<div class="lbl" style="left:630.7px;top:385.3px;color:#fff;font-size:9.9px;letter-spacing:-0.386px">Feature</div>
<div class="lbl" style="left:630.7px;top:398.6px;color:#111;font-size:9.9px;letter-spacing:-0.294px">Characteristic</div>
<div class="lbl" style="left:630.7px;top:411.8px;color:#111;font-size:9.9px;letter-spacing:-0.023px">Material Condition</div>
<div class="lbl" style="left:630.7px;top:425.1px;color:#111;font-size:9.9px;letter-spacing:-0.602px">Symbol</div>
<div class="lbl" style="left:744.7px;top:357.6px;color:#111;font-size:9.9px;letter-spacing:-0.200px">Filter</div>
<div class="abs" style="left:745px;top:370.5px;width:10px;height:19px;background:#f0f0f0;border:1px solid #e2e2e2"></div>
<div class="box" style="left:757px;top:370.5px;width:25px;height:19px"></div><div class="lbl" style="left:761.5px;top:373.2px;font-size:9.6px">S</div>
<div class="box" style="left:784px;top:370.5px;width:25px;height:19px"></div>
<div class="dbox" style="left:811.3px;top:370.5px;width:25px;height:19px"></div>
<div class="dbox" style="left:838.5px;top:370.5px;width:25px;height:19px"></div>
<div class="dbox" style="left:865.8px;top:370.5px;width:25px;height:19px"></div>
<div class="dbox" style="left:893.0px;top:370.5px;width:25px;height:19px"></div>
<div class="dbox" style="left:920.3px;top:370.5px;width:25px;height:19px"></div>
<svg width="1280" height="720" style="pointer-events:none"><path d="M751.5,377.3 L748.5,379.8 L751.5,382.3Z M952.4,377 L955.4,379.5 L952.4,382Z" fill="#222"/></svg>
<div class="btn" style="left:745.1px;top:392.8px;height:18.2px;line-height:17.2px">G</div>
<div class="btn" style="left:768.7px;top:392.8px;height:18.2px;background:#cfe4f7;border:1.5px solid #3c8ad6;line-height:16.2px">S</div>
<div class="btn" style="left:792.3px;top:392.8px;height:18.2px;line-height:17.2px">SW</div>
<div class="btn" style="left:816.0px;top:392.8px;height:18.2px;line-height:17.2px">CW</div>
<div class="btn" style="left:839.6px;top:392.8px;height:18.2px;line-height:17.2px">RG</div>
<div class="btn" style="left:863.2px;top:392.8px;height:18.2px;line-height:17.2px">RS</div>
<div class="btn" style="left:886.8px;top:392.8px;height:18.2px;line-height:17.2px">OB</div>
<div class="btn" style="left:910.4px;top:392.8px;height:18.2px;line-height:17.2px">OH</div>
<div class="btn" style="left:934.1px;top:392.8px;height:18.2px;line-height:17.2px">OD</div>
<div class="btn" style="left:745.1px;top:414.8px;line-height:16px">CB</div>
<div class="btn" style="left:768.7px;top:414.8px;line-height:16px">CH</div>
<div class="btn" style="left:792.3px;top:414.8px;line-height:16px">CD</div>
<div class="btn" style="left:816.0px;top:414.8px;line-height:16px">AB</div>
<div class="btn" style="left:839.6px;top:414.8px;line-height:16px">AH</div>
<div class="btn" style="left:863.2px;top:414.8px;line-height:16px">AD</div>
<div class="btn" style="left:886.8px;top:414.8px;line-height:16px">F</div>
<div class="btn" style="left:910.4px;top:414.8px;line-height:16px">H</div>
<div class="btn" style="left:744.8px;top:435.8px;height:18px;line-height:16px">-</div>
<div class="box" style="left:767.8px;top:435.3px;width:32px;height:19px"></div>
<div class="btn" style="left:803px;top:435.8px;height:18px;line-height:16px">-</div>
<div class="btn" style="left:826.8px;top:435.8px;width:31.5px;height:18px;line-height:16px;letter-spacing:-0.45px">Space</div>
<div class="btn" style="left:862.4px;top:435.8px;width:19.3px;height:18px;line-height:16px">x</div>
<div class="btn" style="left:884.4px;top:435.8px;width:19.5px;height:18px;line-height:16px">-</div>
<div class="box" style="left:907.1px;top:435.3px;width:32px;height:19px"></div>
<div class="btn" style="left:940.3px;top:435.8px;width:19px;height:18px;line-height:16px">-</div>
<div class="lbl" style="left:747.2px;top:460.1px;color:#111;font-size:9.9px;letter-spacing:-0.323px">Associated Feature</div>
<div class="btn cb" style="left:747.0px;top:472.9px"></div>
<div class="btn cb" style="left:770.5px;top:472.9px"></div>
<div class="btn cb" style="left:794.1px;top:472.9px"></div>
<div class="btn cb" style="left:817.6px;top:472.9px"></div>
<div class="btn cb" style="left:841.2px;top:472.9px"></div>
<div class="lbl" style="left:747.2px;top:495.1px;color:#111;font-size:9.9px;letter-spacing:-0.327px">Derived Feature</div>
<div class="btn cb" style="left:747px;top:508px"></div>
<div class="dbox" style="left:770px;top:508.5px;width:42.5px;height:19.5px"></div>
<div class="dbox" style="left:815px;top:508.5px;width:42px;height:19.5px"></div>
<div class="btn cb" style="left:859.5px;top:508px"></div>
<div class="btn" style="left:819.2px;top:538px;width:60.5px;height:19.5px;line-height:17.5px;border-color:#adadad;font-size:9.9px;letter-spacing:-0.278px">Add Datum</div>
<div class="btn" style="left:893.4px;top:538px;width:60.5px;height:19.5px;line-height:17.5px;border-color:#adadad;font-size:9.9px;letter-spacing:-0.189px">Done</div>
<svg width="1280" height="720" style="pointer-events:none"><circle cx="756.9" cy="483.1" r="7" fill="none" stroke="#222" stroke-width="1.3"/><text x="756.9" y="486.8" font-size="11" text-anchor="middle" fill="#111" stroke="#111" stroke-width="0.3">C</text><circle cx="780.4" cy="483.1" r="7" fill="none" stroke="#222" stroke-width="1.3"/><text x="780.4" y="486.8" font-size="11" text-anchor="middle" fill="#111" stroke="#111" stroke-width="0.3">G</text><circle cx="804.0" cy="483.1" r="7" fill="none" stroke="#222" stroke-width="1.3"/><text x="804.0" y="486.8" font-size="11" text-anchor="middle" fill="#111" stroke="#111" stroke-width="0.3">N</text><circle cx="827.5" cy="483.1" r="7" fill="none" stroke="#222" stroke-width="1.3"/><text x="827.5" y="486.8" font-size="11" text-anchor="middle" fill="#111" stroke="#111" stroke-width="0.3">T</text><circle cx="851.1" cy="483.1" r="7" fill="none" stroke="#222" stroke-width="1.3"/><text x="851.1" y="486.8" font-size="11" text-anchor="middle" fill="#111" stroke="#111" stroke-width="0.3">X</text><circle cx="756.9" cy="518.1" r="7" fill="none" stroke="#222" stroke-width="1.3"/><text x="756.9" y="521.8" font-size="11" text-anchor="middle" fill="#111" stroke="#111" stroke-width="0.3">P</text><circle cx="869.5" cy="518.1" r="7" fill="none" stroke="#222" stroke-width="1.3"/><text x="869.5" y="521.8" font-size="11" text-anchor="middle" fill="#111" stroke="#111" stroke-width="0.3">A</text><path d="M781.3,415.4 L781.3,437.4 L786,433.6 L790.4,440.4 L793.4,438.6 L789.6,432 L796.6,431 Z" fill="#fff" stroke="#3a3a3a" stroke-width="1.1" stroke-linejoin="round"/></svg>
<div class="abs" style="left:0;top:691.5px;width:985px;height:13px;background:#f6f6f6;border-top:1px solid #b9b9b9"></div>
<div class="abs" style="left:326.5px;top:692.5px;width:3px;height:12px;background:#e8e8e8;border-left:1px solid #555;border-right:1px solid #999"></div>
<div class="abs" style="left:330px;top:692.5px;width:655px;height:12px;background:#f0f0f0"></div>
<div class="abs" style="left:703px;top:693px;width:253px;height:11px;background:#cdcdcd"></div>
<svg width="1280" height="720" style="pointer-events:none"><path d="M338.5,694.5 L335,698 L338.5,701.5" fill="none" stroke="#444" stroke-width="1.5"/><path d="M961.5,694.5 L965,698 L961.5,701.5" fill="none" stroke="#444" stroke-width="1.5"/></svg>
<div class="abs" style="left:0;top:704.2px;width:1280px;height:16px;background:#e3e3e3;border-top:1px solid #c3c3c3"></div>
<div class="lbl" style="left:833.0px;top:707.0px;color:#111;font-size:9.6px;letter-spacing:0.081px">Fully Defined</div>
<div class="lbl" style="left:905.0px;top:707.0px;color:#111;font-size:9.6px;letter-spacing:-0.060px">Editing Detail View E (1 : 1)</div>
<div class="lbl" style="left:1052.0px;top:707.0px;color:#a8a8a8;font-size:9.6px;letter-spacing:-0.295px">1 : 2</div>
<div class="lbl" style="left:1192.0px;top:707.0px;color:#a8a8a8;font-size:9.6px;letter-spacing:0.045px">MMGS</div>
<div class="abs" style="left:1112px;top:705px;width:1px;height:15px;background:#d0d0d0"></div>
<svg width="1280" height="720" style="pointer-events:none"><path d="M1090.5,715 L1093,711.5 L1095.5,715Z M1237.5,715 L1240,711.5 L1242.5,715Z" fill="#777"/><path d="M1264.6,708.8 L1268.4,707.5 L1277.6,712.1 L1276.9,714.9 L1272.6,718.6 L1265.2,715.2 L1264,711.7 Z" fill="#dcdcdc" stroke="#2e2e2e" stroke-width="1.3" stroke-linejoin="round"/><circle cx="1270.4" cy="710.8" r="1.7" fill="#f4f4f4" stroke="#2e2e2e" stroke-width="0.9"/><path d="M1266,713.3 L1272.8,716.4 M1268.5,712 L1275,715" stroke="#aaa" stroke-width="0.9" fill="none"/></svg>

</div></body></html>
